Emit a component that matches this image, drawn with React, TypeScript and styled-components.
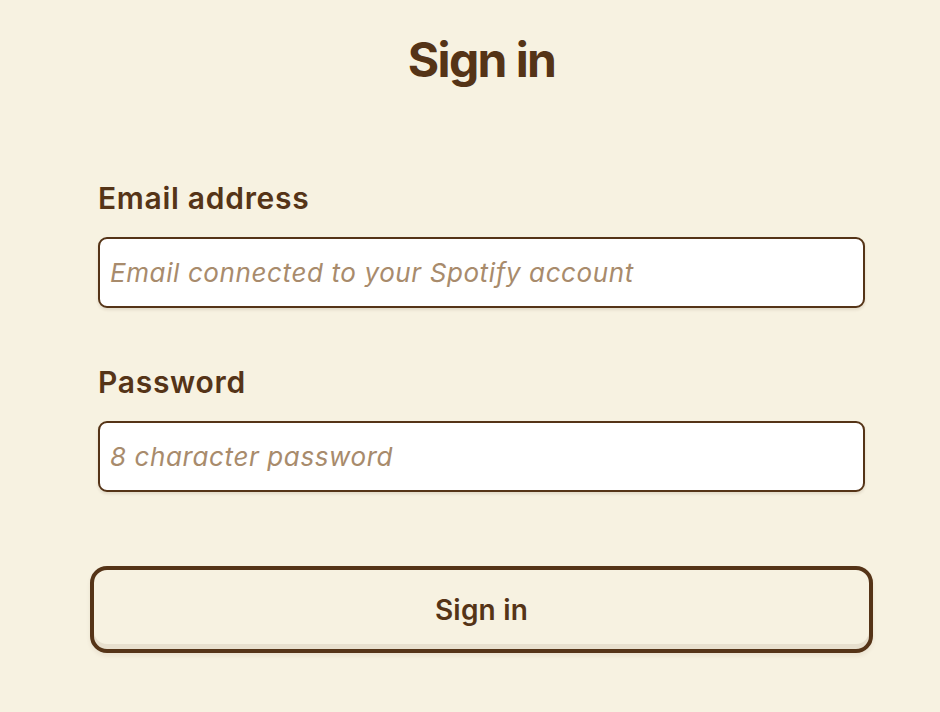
import React from "react";
import styled, { createGlobalStyle } from "styled-components";

const Global = createGlobalStyle`
  html, body { margin: 0; padding: 0; background: #f7f2e1; }
  body { font-family: Inter, "Noto Sans", sans-serif; color: #553417; }
  * { box-sizing: border-box; }
`;

const Page = styled.div`
  min-height: 712px;
  padding: 30px 0 0 90px;
`;

const Form = styled.form`
  width: 783px;
  display: flex;
  flex-direction: column;
`;

const Title = styled.h1`
  margin: 0 0 90px;
  text-align: center;
  font-size: 48px;
  font-weight: 700;
  letter-spacing: -1.6px;
  line-height: 60px;
  color: #553417;
`;

const Field = styled.div`
  display: flex;
  flex-direction: column;
  padding: 0 8px;
  margin-bottom: 56px;
`;

const Label = styled.label`
  font-size: 30px;
  font-weight: 600;
  letter-spacing: 0.7px;
  line-height: 36px;
  margin-bottom: 21px;
  color: #553417;
`;

const Input = styled.input`
  height: 71px;
  width: 100%;
  border: 2px solid #553417;
  border-radius: 9px;
  background: #ffffff;
  padding: 0 10px;
  font-family: Inter, "Noto Sans", sans-serif;
  font-size: 26px;
  letter-spacing: 0.6px;
  color: #553417;
  box-shadow: 0 2px 3px rgba(85, 52, 23, 0.12);
  outline: none;
  &::placeholder {
    color: #a88b6c;
    font-style: italic;
  }
`;

const Button = styled.button`
  margin-top: 18px;
  height: 87px;
  width: 100%;
  border: 4px solid #553417;
  border-radius: 17px;
  background: #f7f2e1;
  font-family: Inter, "Noto Sans", sans-serif;
  font-size: 28px;
  font-weight: 600;
  letter-spacing: 0.2px;
  color: #553417;
  box-shadow: inset 0 -5px 0 rgba(120, 100, 70, 0.12), 0 3px 4px rgba(85, 52, 23, 0.08);
  cursor: pointer;
`;

export default function App() {
  return (
    <>
      <Global />
      <Page>
        <Form onSubmit={(e) => e.preventDefault()}>
          <Title>Sign in</Title>
          <Field>
            <Label htmlFor="email">Email address</Label>
            <Input id="email" type="email" placeholder="Email connected to your Spotify account" />
          </Field>
          <Field>
            <Label htmlFor="password">Password</Label>
            <Input id="password" type="password" placeholder="8 character password" />
          </Field>
          <Button type="submit">Sign in</Button>
        </Form>
      </Page>
    </>
  );
}
